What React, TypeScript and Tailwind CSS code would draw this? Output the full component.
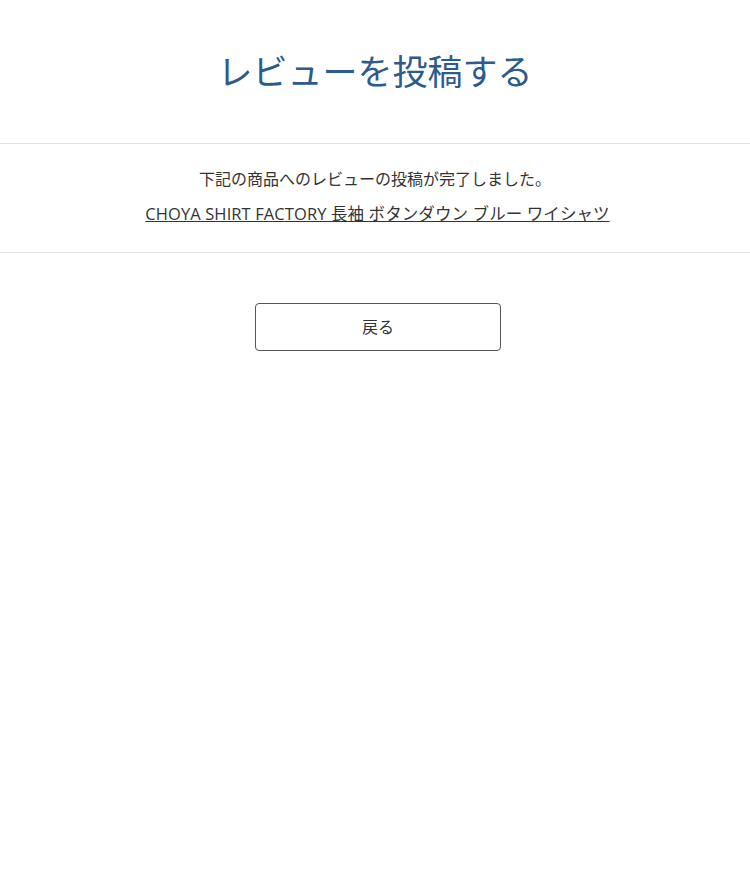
export default function App() {
  return (
    <div className="min-h-[875px] bg-white text-[#333] font-['Open_Sans','Noto_Sans_CJK_JP',sans-serif]">
      <h1 className="pt-[44px] pb-[48px] text-center text-[35px] leading-[51px] font-normal text-[#2d5b8c] font-['Noto_Sans_CJK_JP',sans-serif]">
        レビューを投稿する
      </h1>
      <div className="border-y border-[#e3e3e3] pt-[23px] pb-[26px] text-center text-[16px] leading-[24px]">
        <p>下記の商品へのレビューの投稿が完了しました。</p>
        <p className="mt-[11px] pl-[5px]">
          <a href="#" className="underline text-[#333] text-[16.5px] tracking-[0.1px]">
            CHOYA SHIRT FACTORY 長袖 ボタンダウン ブルー ワイシャツ
          </a>
        </p>
      </div>
      <div className="flex justify-center pt-[50px] pl-[6px]">
        <button className="h-[48px] w-[246px] rounded-[4px] border border-[#555] bg-white text-[16px] text-[#333]">
          戻る
        </button>
      </div>
    </div>
  );
}
